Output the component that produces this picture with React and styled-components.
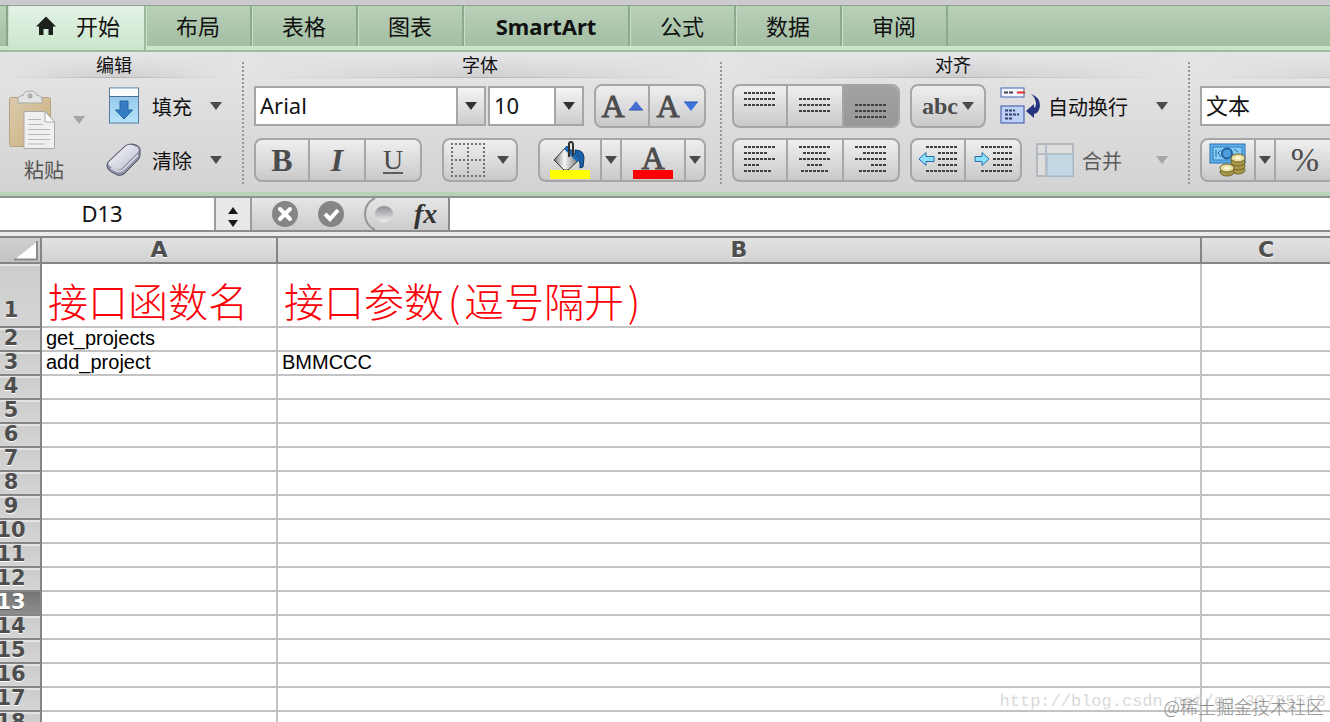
import React, { useState } from 'react'
import styled, { createGlobalStyle } from 'styled-components'

const GlobalStyle=createGlobalStyle`
    * {
        box-sizing: border-box;
    }
    body {
        margin: 0;
        background: #fff;
        font-family: "Noto Sans", "Noto Sans CJK SC", sans-serif;
        color: #111;
    }
    button, select, input {
        font-family: inherit;
        color: inherit;
        margin: 0;
    }
`
const Container=styled.div`
    position: relative;
    display: flex;
    flex-direction: column;
    height: 100vh;
    overflow: hidden;
`

/* tabs */
const TabBar=styled.nav`
    display: flex;
    flex: none;
    height: 52px;
    padding-top: 1px;
    border-top: 5px solid #cbcace;
    border-bottom: 2px solid #9dbb9f;
    background: linear-gradient(#8fa190 1px, #b9cfb9 1px, #a3bfa3 41px, #c9e6cb 41px);
`
const TabStub=styled.div`
    width: 8px;
    height: 40px;
    border-right: 2px solid #8aa58b;
`
const Tab=styled.button`
    display: flex;
    align-items: center;
    justify-content: center;
    gap: 20px;
    width: ${props=>props.$width}px;
    height: ${props=>props.$active?44:40}px;
    padding: 0 0 ${props=>props.$active?4:0}px ${props=>props.$active?4:0}px;
    border: none;
    border-right: 2px solid ${props=>props.$active?"#9cb99d":"#8ca88d"};
    background: ${props=>props.$active?"linear-gradient(#e4f2e5, #cae6cc)":"linear-gradient(#b9cfb9, #a3bfa3)"};
    box-shadow: inset 1px 0 #c9dfc9;
    font-size: 22px;
    font-weight: ${props=>props.$bold?700:400};
    line-height: 30px;
`

/* ribbon */
const Ribbon=styled.div`
    display: flex;
    flex: none;
    height: 144px;
    border-bottom: 4px solid #b5d3b8;
    background: linear-gradient(#e6e6e8, #dedede 40%, #d3d3d3);
`
const Group=styled.section`
    position: relative;
    flex: ${props=>props.$width?"none":"1"};
    width: ${props=>props.$width?props.$width+"px":"auto"};
    padding: 0 12px 0 ${props=>props.$flush?0:10}px;
    overflow: hidden;

    &::after {
        content: "";
        position: absolute;
        top: 10px;
        right: 0;
        bottom: 6px;
        width: ${props=>props.$width?2:0}px;
        background: repeating-linear-gradient(#989898 0 2px, transparent 2px 4px);
    }
`
const GroupTitle=styled.h2`
    width: ${props=>props.$width?props.$width+"px":"auto"};
    height: 26px;
    margin: 0 0 6px;
    padding-right: 4px;
    border-bottom: 1px solid;
    border-image: linear-gradient(to right, transparent, #b4b4b4, transparent) 1;
    background: linear-gradient(to right, #e3e3e4, rgba(227, 227, 228, 0) 50%, #e3e3e4), linear-gradient(#e8e8ea, #cfcfd0);
    font-size: 18px;
    font-weight: 400;
    line-height: 26px;
    text-align: center;
`
const Row=styled.div`
    display: flex;
    align-items: center;
    height: 44px;
    margin-bottom: 10px;
    gap: ${props=>props.$gap||10}px;
`
const EditTools=styled.div`
    display: flex;
`
const EditColumn=styled.div`
    flex: 1;
`
const PasteButton=styled.button`
    display: flex;
    flex-direction: column;
    width: 106px;
    height: 98px;
    padding: 6px 0 0 8px;
    border: none;
    background: none;
    color: #555;
    font-size: 20px;
    line-height: 28px;
    text-align: left;
`
const PasteTop=styled.span`
    display: flex;
    align-items: center;
    gap: 17px;
    height: 60px;
`
const PasteText=styled.span`
    padding: 7px 0 0 16px;
`
const ToolButton=styled.button`
    display: flex;
    flex: 1;
    align-items: center;
    gap: 8px;
    height: 44px;
    padding: 0 10px 0 ${props=>props.$inset||0}px;
    border: none;
    background: none;
    color: ${props=>props.disabled?"#5c5c5c":"#111"};
    font-size: 20px;
    line-height: 28px;
    white-space: nowrap;
`
const ToolText=styled.span`
    flex: 1;
    padding: 3px 0 0 ${props=>props.$indent||0}px;
    text-align: left;
`
const ButtonBox=styled.div`
    display: flex;
    flex: none;
    height: 44px;
    margin-left: ${props=>props.$apart?8:0}px;
    border: 2px solid #a6a6a6;
    border-radius: 8px;
    background: linear-gradient(#efefef, #c9c9c9);
    overflow: hidden;
`
const BoxButton=styled.button`
    display: flex;
    flex: none;
    align-items: center;
    justify-content: center;
    gap: 4px;
    width: ${props=>props.$width||54}px;
    height: 40px;
    padding: 0;
    border: none;
    border-right: 2px solid #a6a6a6;
    background: ${props=>props.$pressed?"linear-gradient(#a2a2a2, #989898)":"none"};
    color: #4c4c4c;

    &:last-child {
        border-right: none;
    }
`
const Glyph=styled.span`
    font-family: "Liberation Serif", serif;
    font-size: ${props=>props.$size||32}px;
    font-weight: ${props=>props.$bold?700:400};
    font-style: ${props=>props.$italic?"italic":"normal"};
    line-height: ${props=>props.$line||36}px;
    -webkit-text-stroke: ${props=>props.$heavy?"1px #4c4c4c":"0"};
`
const Underlined=styled(Glyph)`
    height: 28px;
    border-bottom: 2px solid #5c5c5c;
    line-height: 28px;
`
const ColorMark=styled.span`
    display: flex;
    flex-direction: column;
    align-items: center;
    justify-content: flex-end;
    width: 40px;
    height: 38px;
    border-bottom: 9px solid ${props=>props.$color};
`
const Combo=styled.div`
    position: relative;
    flex: none;
    width: ${props=>props.$width}px;
    height: 40px;
`
const Select=styled.select`
    appearance: none;
    width: 100%;
    height: 40px;
    padding: 0 30px 2px 4px;
    border: 2px solid #a6a6a6;
    border-radius: 0;
    background: #fff;
    font-size: 22px;
    line-height: 30px;
`
const ComboArrow=styled.span`
    position: absolute;
    top: 2px;
    right: 2px;
    bottom: 2px;
    display: flex;
    align-items: center;
    justify-content: center;
    width: 28px;
    border-left: 2px solid #a6a6a6;
    background: linear-gradient(#f4f4f4, #cdcdcd);
    pointer-events: none;
`

/* formula bar */
const FormulaBar=styled.div`
    display: flex;
    flex: none;
    height: 40px;
    border-top: 2px solid #8f9290;
    border-bottom: 4px solid #ebebeb;
    background: #dadada;
    box-shadow: inset 0 -2px #8c8c8c;
    padding-bottom: 2px;
`
const NameBox=styled.input`
    width: 214px;
    height: 32px;
    padding: 0 10px 2px 0;
    border: none;
    background: #fff;
    font-size: 22px;
    text-align: center;
`
const Spinner=styled.button`
    width: 38px;
    height: 32px;
    padding: 0;
    border: solid #9c9c9c;
    border-width: 0 2px;
    background: #e9e9e9;
    & svg {
        display: block;
        margin: 6px auto 0;
    }
`
const FormulaTools=styled.div`
    display: flex;
    align-items: center;
    gap: 20px;
    width: 198px;
    padding-left: 20px;
    border-right: 2px solid #8c8c8c;
    background: linear-gradient(#e6e6e6, #cccccc);
`
const IconButton=styled.button`
    display: flex;
    align-items: center;
    height: 32px;
    padding: 0;
    border: none;
    background: none;
    color: #333;
`
const FormulaInput=styled.input`
    flex: 1;
    min-width: 0;
    height: 32px;
    padding: 0 6px;
    border: none;
    background: #fff;
    font-size: 20px;
`

/* sheet */
const Sheet=styled.main`
    flex: 1;
    min-height: 0;
    overflow: hidden;
`
const Table=styled.table`
    width: 100%;
    table-layout: fixed;
    border-collapse: separate;
    border-spacing: 0;
    font-family: "Liberation Sans", "Noto Sans CJK SC", sans-serif;
    font-size: 20px;
`
const ColHead=styled.th`
    height: 28px;
    padding: 0;
    border: solid #858585;
    border-width: 2px 2px 2px 0;
    background: linear-gradient(#e2e2e2, #d2d2d2);
    color: #4e4e4e;
    font-family: "DejaVu Sans", sans-serif;
    font-size: 22px;
    line-height: 24px;
    text-shadow: 0 1px #fff;

    &:last-child {
        border-right: none;
    }
`
const Corner=styled(ColHead)`
    background: linear-gradient(#cfcfcf, #c4c4c4);
    & svg {
        display: block;
        margin-left: auto;
    }
`
const RowHead=styled.th`
    padding: 0 18px 0 0;
    border: solid #858585;
    border-width: 0 2px 2px 0;
    background: ${props=>props.$selected?"linear-gradient(#757575, #8e8e8e)":"linear-gradient(#e4e4e4 2px, #cdcdcd 2px, #d4d4d4)"};
    color: ${props=>props.$selected?"#fff":"#4e4e4e"};
    font-family: "DejaVu Sans", sans-serif;
    font-size: 21px;
    text-shadow: ${props=>props.$selected?"0 1px #555":"0 1px #fff"};
    vertical-align: bottom;
`
const RowNumber=styled.div`
    display: flex;
    justify-content: center;
    height: ${props=>props.$tall?26:22}px;
    line-height: 20px;
`
const Cell=styled.td`
    height: ${props=>props.$tall?64:24}px;
    padding: ${props=>props.$tall?"16px 6px 0":"0 4px"};
    border: solid #c3c3c3;
    border-width: 0 2px 2px 0;
    color: ${props=>props.$tall?"#fb0007":"#000"};
    font-size: ${props=>props.$tall?40:20}px;
    font-weight: ${props=>props.$tall?300:400};
    line-height: ${props=>props.$tall?40:20}px;
    vertical-align: top;
    white-space: nowrap;

    &:last-child {
        border-right: none;
    }
`
const HeadText=styled.div`
    display: flex;
    height: 40px;
    font-family: "Noto Sans CJK SC", sans-serif;
`
const Paren=styled.span`
    width: 20px;
    text-align: center;
`
const Watermark=styled.div`
    position: absolute;
    right: ${props=>props.$right}px;
    bottom: ${props=>props.$bottom}px;
    color: ${props=>props.$color};
    font-family: ${props=>props.$mono?'"Liberation Mono", monospace':'"Noto Sans CJK SC", sans-serif'};
    font-size: ${props=>props.$mono?17:18}px;
    font-weight: 300;
    line-height: 22px;
    white-space: nowrap;
    pointer-events: none;
`

/* icons */
const Arrow=({color="#4a4a4a"})=>(
    <svg width="12" height="8" viewBox="0 0 12 8"><path d="M0 0h12L6 8z" fill={color}/></svg>
)

const HomeIcon=()=>(
    <svg width="20" height="20" viewBox="0 0 20 20">
        <path d="M10 0.500L20 10.500H17V19H12.500V13H7.500V19H3V10.500H0z" fill="#1c211c"/>
    </svg>
)

const PasteIcon=()=>(
    <svg width="48" height="60" viewBox="0 0 48 60">
        <defs>
            <linearGradient id="board" x1="0" y1="0" x2="1" y2="1">
                <stop offset="0" stopColor="#dccbae"/>
                <stop offset="1" stopColor="#c9ae7b"/>
            </linearGradient>
        </defs>
        <rect x="1.500" y="7.500" width="41" height="49" rx="2" fill="url(#board)" stroke="#b5a283"/>
        <path d="M10 13V9q0-3 5-3.500Q16 1 22 1t7 4.500q5 .5 5 3.500v4z" fill="#e3e3e3" stroke="#a9a9a9"/>
        <circle cx="22" cy="6" r="2" fill="#bbb" stroke="#999"/>
        <path d="M16 21.500h21L46.500 32v26.500H16z" fill="#f0f0f0" stroke="#a9a9a9"/>
        <path d="M37 21.500V32h9.500z" fill="#fff" stroke="#a9a9a9"/>
        <path d="M20 29.500h13M20 34.500h15M20 39.500h22M20 44.500h22M20 49.500h22M20 54h17" stroke="#b7b7b7"/>
    </svg>
)

const FillIcon=()=>(
    <svg width="32" height="38" viewBox="0 0 32 38">
        <defs>
            <linearGradient id="fillBox" x1="0" y1="0" x2="0" y2="1">
                <stop offset="0" stopColor="#8dc0ea"/>
                <stop offset="1" stopColor="#b5e4f8"/>
            </linearGradient>
        </defs>
        <rect x="1.500" y="1" width="29" height="35" fill="url(#fillBox)" stroke="#587a9d"/>
        <path d="M2 1.500h28V9H2z" fill="#fbfbfb"/>
        <path d="M1.500 9.500h29" stroke="#4d6d90"/>
        <path d="M12 14h8v9h4.500L16 32l-8.500-9H12z" fill="#347cc4" stroke="#2a62a6"/>
    </svg>
)

const EraserIcon=()=>(
    <svg width="36" height="36" viewBox="0 0 36 36">
        <defs>
            <linearGradient id="eraser" x1="0" y1="0" x2="1" y2="1">
                <stop offset="0" stopColor="#fbfbff"/>
                <stop offset="1" stopColor="#b9bccb"/>
            </linearGradient>
        </defs>
        <path d="M2 20L19 4q3-2 7-2l4 1q5 2 4 7v4q-1 3-3 5L18 32q-3 2-7 1l-7-4q-3-2-3-5 0-2 1-4z" fill="#8e91a5" stroke="#4d5064"/>
        <path d="M3 20L20 4q3-2 6-1l5 2q3 2 1 5L16 26q-3 3-7 1l-5-3q-3-2-1-4z" fill="url(#eraser)"/>
        <path d="M5 26l6 3q3 1 6-1l15-15" fill="none" stroke="#cfd1df" strokeWidth="2"/>
    </svg>
)

const BorderIcon=()=>(
    <svg width="34" height="34" viewBox="0 0 34 34">
        <path d="M0 1h34M0 17h34M0 33h34M1 0v34M17 0v34M33 0v34" stroke="#717171" strokeWidth="2" strokeDasharray="2 2"/>
    </svg>
)

const BucketIcon=()=>(
    <svg width="34" height="29" viewBox="0 0 34 29">
        <defs>
            <linearGradient id="bucket" x1="0" y1="0" x2="1" y2="0">
                <stop offset="0" stopColor="#777"/>
                <stop offset=".4" stopColor="#f5f5f5"/>
                <stop offset="1" stopColor="#666"/>
            </linearGradient>
        </defs>
        <path d="M22 9q9 0 9 8l-1 9-3 1q1-8-5-12z" fill="#1a62ac" stroke="#0b3767"/>
        <path d="M14 5L27 18 15 29h-4L1 19z" fill="url(#bucket)" stroke="#333"/>
        <path d="M11 8l13 13 3-3L14 5z" fill="#1c6bbb"/>
        <path d="M16 16V3q0-2 2-2t2 3v11" fill="none" stroke="#333" strokeWidth="2"/>
    </svg>
)

const SizeArrow=({up})=>(
    <svg width="14" height="10" viewBox="0 0 14 10">
        <path d={up?"M0 9h14L7 0z":"M0 1h14L7 10z"} fill={up?"#4870d4":"#3b75dc"}/>
        <path d={up?"M0 9h14":"M0 1h14"} stroke="#2c4fb4"/>
    </svg>
)

// every line is [x, y, length]
const Lines=({lines})=>(
    <svg width="40" height="32" viewBox="0 0 40 32">
        {lines.map(([x,y,length])=>(
            <path key={y} d={`M${x} ${y}h${length}`} stroke="#404040" strokeWidth="2" strokeDasharray="3 1"/>
        ))}
    </svg>
)

const topLines=[[4,3,32],[4,9,32],[4,15,32]]
const middleLines=[[4,9,32],[4,15,32],[4,21,32]]
const bottomLines=[[4,15,32],[4,21,32],[4,27,32]]
const leftLines=[[4,3,32],[4,9,24],[4,15,32],[4,21,16],[4,27,28]]
const centerLines=[[4,3,32],[8,9,24],[4,15,32],[12,21,16],[6,27,28]]
const rightLines=[[4,3,32],[12,9,24],[4,15,32],[20,21,16],[8,27,28]]

const IndentIcon=({right})=>(
    <svg width="42" height="32" viewBox="0 0 42 32">
        <path d="M9 3h32M21 9h20M21 15h20M21 21h20M9 27h32" stroke="#404040" strokeWidth="2" strokeDasharray="3 1"/>
        <path d={right?"M3 12.500h7V8.500l7 6.500-7 6.500v-4H3z":"M17 12.500H9V8.500L2 15l7 6.500v-4h8z"} fill="#8be0fb" stroke="#2b6ea6"/>
    </svg>
)

const WrapIcon=()=>(
    <svg width="40" height="38" viewBox="0 0 40 38">
        <rect x="1" y="1" width="23" height="9" fill="#f3f6fd" stroke="#4464b0"/>
        <path d="M4 5.500h10" stroke="#445" strokeWidth="2" strokeDasharray="4 1"/>
        <path d="M17 5.500h8" stroke="#e02a20" strokeWidth="2"/>
        <rect x="1" y="19" width="23" height="17" fill="#bfd0f6" stroke="#3352a0"/>
        <path d="M5 23.500h10M5 27.500h14M5 31.500h8" stroke="#34416c" strokeWidth="2" strokeDasharray="3 1"/>
        <path d="M31 7q9 3 9 12-1 7-6 8v4l-8-7 8-7v4q2-1 2-5-1-6-5-9z" fill="#26347e"/>
    </svg>
)

const MergeIcon=()=>(
    <svg width="38" height="34" viewBox="0 0 38 34">
        <path d="M1 1h36v32H1z" fill="#dedede" stroke="#b2b8bd" strokeWidth="2"/>
        <path d="M11 11h26v22H11z" fill="#c3d6e4" stroke="#9eb8cc"/>
        <path d="M10 1v32M1 11h36" stroke="#b4bdc5" strokeWidth="2"/>
    </svg>
)

const Coins=({x,y,count})=>(
    <g>
        {Array.from({length:count},(_,i)=>(
            <ellipse key={i} cx={x} cy={y-i*4} rx="7" ry="4" fill={i===count-1?"#e9dfa0":"#a99848"} stroke="#6e6228"/>
        ))}
        <ellipse cx={x} cy={y-(count-1)*4} rx="3" ry="1.500" fill="#fffbd8"/>
    </g>
)

const MoneyIcon=()=>(
    <svg width="38" height="34" viewBox="0 0 38 34">
        <rect x="1" y="1" width="35" height="19" fill="#5eb3ea" stroke="#2b6dae"/>
        <rect x="4" y="4" width="29" height="13" fill="#86cdf4" stroke="#2f7cc0"/>
        <circle cx="18" cy="10.500" r="5" fill="#4d9fdd" stroke="#215f9f" strokeWidth="2"/>
        <path d="M7 7v7M12 7l-3 3 3 4M25 6l4 3" fill="none" stroke="#2668a8"/>
        <Coins x={29} y={27} count={4}/>
        <Coins x={18} y={29} count={2}/>
    </svg>
)

const SpinnerIcon=()=>(
    <svg width="10" height="20" viewBox="0 0 10 20">
        <path d="M0 7h10L5 0zM0 13h10l-5 7z" fill="#1a1a1a"/>
    </svg>
)

const CancelIcon=()=>(
    <svg width="26" height="26" viewBox="0 0 26 26">
        <circle cx="13" cy="13" r="13" fill="#858585"/>
        <path d="M8 8l10 10M18 8L8 18" stroke="#fff" strokeWidth="4" strokeLinecap="round"/>
    </svg>
)

const AcceptIcon=()=>(
    <svg width="26" height="26" viewBox="0 0 26 26">
        <circle cx="13" cy="13" r="13" fill="#858585"/>
        <path d="M7 13l5 5 8-9" fill="none" stroke="#fff" strokeWidth="4"/>
    </svg>
)

const BallIcon=()=>(
    <svg width="30" height="32" viewBox="0 0 30 32">
        <defs>
            <linearGradient id="ball" x1="0" y1="0" x2="0" y2="1">
                <stop offset="0" stopColor="#8d8d93"/>
                <stop offset="1" stopColor="#efefef"/>
            </linearGradient>
        </defs>
        <path d="M11 0Q1 5 1 16t10 16" fill="none" stroke="#979797" strokeWidth="2"/>
        <ellipse cx="20" cy="16" rx="9" ry="8" fill="url(#ball)"/>
    </svg>
)

const CornerIcon=()=>(
    <svg width="26" height="24" viewBox="0 0 26 24">
        <path d="M0 22h23V4z" fill="#fff"/>
        <path d="M0 21.500h23V3" fill="none" stroke="#8a8a8a" strokeWidth="2"/>
    </svg>
)

const tabs=[
    {name:"开始",width:138},
    {name:"布局",width:106},
    {name:"表格",width:106},
    {name:"图表",width:106},
    {name:"SmartArt",width:166},
    {name:"公式",width:106},
    {name:"数据",width:106},
    {name:"审阅",width:106},
]

const rows=Array.from({length:20},(_,i)=>i+1)
const data={
    2:["get_projects",""],
    3:["add_project","BMMCCC"],
}

const EditGroup=()=>(
    <Group $width={244} $flush>
        <GroupTitle>编辑</GroupTitle>
        <EditTools>
            <PasteButton disabled>
                <PasteTop>
                    <PasteIcon/>
                    <Arrow color="#a5a5a5"/>
                </PasteTop>
                <PasteText>粘贴</PasteText>
            </PasteButton>
            <EditColumn>
                <Row>
                    <ToolButton $inset={2}>
                        <FillIcon/>
                        <ToolText $indent={4}>填充</ToolText>
                        <Arrow/>
                    </ToolButton>
                </Row>
                <Row>
                    <ToolButton>
                        <EraserIcon/>
                        <ToolText $indent={2}>清除</ToolText>
                        <Arrow/>
                    </ToolButton>
                </Row>
            </EditColumn>
        </EditTools>
    </Group>
)

const FontGroup=()=>(
    <Group $width={478}>
        <GroupTitle>字体</GroupTitle>
        <Row $gap={2}>
            <Combo $width={232}>
                <Select aria-label="字体">
                    <option>Arial</option>
                    <option>Verdana</option>
                </Select>
                <ComboArrow><Arrow color="#333"/></ComboArrow>
            </Combo>
            <Combo $width={96}>
                <Select aria-label="字号">
                    <option>10</option>
                    <option>12</option>
                </Select>
                <ComboArrow><Arrow color="#333"/></ComboArrow>
            </Combo>
            <ButtonBox $apart>
                <BoxButton aria-label="增大字号"><Glyph $heavy>A</Glyph><SizeArrow up/></BoxButton>
                <BoxButton aria-label="减小字号"><Glyph $heavy>A</Glyph><SizeArrow/></BoxButton>
            </ButtonBox>
        </Row>
        <Row $gap={20}>
            <ButtonBox>
                <BoxButton aria-label="加粗"><Glyph $bold>B</Glyph></BoxButton>
                <BoxButton $width={56} aria-label="倾斜"><Glyph $bold $italic>I</Glyph></BoxButton>
                <BoxButton aria-label="下划线"><Underlined $size={28}>U</Underlined></BoxButton>
            </ButtonBox>
            <ButtonBox>
                <BoxButton $width={72} aria-label="边框"><BorderIcon/>&nbsp;<Arrow/></BoxButton>
            </ButtonBox>
            <ButtonBox>
                <BoxButton $width={62} aria-label="填充颜色"><ColorMark $color="#ffff00"><BucketIcon/></ColorMark></BoxButton>
                <BoxButton $width={20} aria-label="选择填充颜色"><Arrow/></BoxButton>
                <BoxButton $width={64} aria-label="字体颜色"><ColorMark $color="#fb0007"><Glyph $heavy $line={24}>A</Glyph></ColorMark></BoxButton>
                <BoxButton $width={18} aria-label="选择字体颜色"><Arrow/></BoxButton>
            </ButtonBox>
        </Row>
    </Group>
)

const AlignGroup=()=>(
    <Group $width={468}>
        <GroupTitle>对齐</GroupTitle>
        <Row>
            <ButtonBox>
                <BoxButton aria-label="顶端对齐"><Lines lines={topLines}/></BoxButton>
                <BoxButton $width={56} aria-label="垂直居中"><Lines lines={middleLines}/></BoxButton>
                <BoxButton $pressed aria-label="底端对齐"><Lines lines={bottomLines}/></BoxButton>
            </ButtonBox>
            <ButtonBox>
                <BoxButton $width={72} aria-label="方向"><Glyph $size={24} $bold>abc</Glyph><Arrow/></BoxButton>
            </ButtonBox>
            <ToolButton $inset={4}>
                <WrapIcon/>
                <ToolText>自动换行</ToolText>
                <Arrow/>
            </ToolButton>
        </Row>
        <Row>
            <ButtonBox>
                <BoxButton aria-label="左对齐"><Lines lines={leftLines}/></BoxButton>
                <BoxButton $width={56} aria-label="居中"><Lines lines={centerLines}/></BoxButton>
                <BoxButton aria-label="右对齐"><Lines lines={rightLines}/></BoxButton>
            </ButtonBox>
            <ButtonBox>
                <BoxButton aria-label="减少缩进"><IndentIcon/></BoxButton>
                <BoxButton aria-label="增加缩进"><IndentIcon right/></BoxButton>
            </ButtonBox>
            <ToolButton $inset={4} disabled>
                <MergeIcon/>
                <ToolText>合并</ToolText>
                <Arrow color="#a5a5a5"/>
            </ToolButton>
        </Row>
    </Group>
)

const NumberGroup=()=>(
    <Group>
        <GroupTitle $width={444}>&nbsp;</GroupTitle>
        <Row>
            <Combo $width={232}>
                <Select aria-label="数字格式">
                    <option>文本</option>
                    <option>常规</option>
                </Select>
                <ComboArrow><Arrow color="#333"/></ComboArrow>
            </Combo>
        </Row>
        <Row>
            <ButtonBox>
                <BoxButton aria-label="货币"><MoneyIcon/></BoxButton>
                <BoxButton $width={20} aria-label="选择货币"><Arrow/></BoxButton>
                <BoxButton $width={58} aria-label="百分比"><Glyph $size={34}>%</Glyph></BoxButton>
            </ButtonBox>
        </Row>
    </Group>
)

const App = () => {
    const [active,setActive]=useState("开始")
    const [name,setName]=useState("D13")
    const [formula,setFormula]=useState("")
  return (
   <Container>
    <GlobalStyle/>
    <TabBar>
        <TabStub/>
        {tabs.map((tab)=>(
            <Tab key={tab.name} $width={tab.width} $active={tab.name===active} $bold={tab.name==="SmartArt"} onClick={()=>setActive(tab.name)}>
                {tab.name==="开始" && <HomeIcon/>}
                {tab.name}
            </Tab>
        ))}
    </TabBar>
    <Ribbon>
        <EditGroup/>
        <FontGroup/>
        <AlignGroup/>
        <NumberGroup/>
    </Ribbon>
    <FormulaBar>
        <NameBox aria-label="名称框" value={name} onChange={(e)=>setName(e.target.value)}/>
        <Spinner aria-label="选择名称"><SpinnerIcon/></Spinner>
        <FormulaTools>
            <IconButton aria-label="取消"><CancelIcon/></IconButton>
            <IconButton aria-label="输入"><AcceptIcon/></IconButton>
            <IconButton aria-label="公式生成器"><BallIcon/></IconButton>
            <IconButton aria-label="插入函数"><Glyph $size={28} $bold $italic>fx</Glyph></IconButton>
        </FormulaTools>
        <FormulaInput aria-label="编辑栏" value={formula} onChange={(e)=>setFormula(e.target.value)}/>
    </FormulaBar>
    <Sheet>
        <Table>
            <colgroup>
                <col width="42"/>
                <col width="236"/>
                <col width="924"/>
                <col/>
            </colgroup>
            <thead>
                <tr>
                    <Corner aria-label="全选"><CornerIcon/></Corner>
                    <ColHead>A</ColHead>
                    <ColHead>B</ColHead>
                    <ColHead>C</ColHead>
                </tr>
            </thead>
            <tbody>
                <tr>
                    <RowHead><RowNumber $tall>1</RowNumber></RowHead>
                    <Cell $tall><HeadText>接口函数名</HeadText></Cell>
                    <Cell $tall><HeadText>接口参数<Paren>(</Paren>逗号隔开<Paren>)</Paren></HeadText></Cell>
                    <Cell $tall/>
                </tr>
                {rows.slice(1).map((row)=>(
                    <tr key={row}>
                        <RowHead $selected={row===13}><RowNumber>{row}</RowNumber></RowHead>
                        <Cell>{data[row]?.[0]}</Cell>
                        <Cell>{data[row]?.[1]}</Cell>
                        <Cell/>
                    </tr>
                ))}
            </tbody>
        </Table>
    </Sheet>
    <Watermark $mono $right={4} $bottom={9} $color="#d9d9d9">http://blog.csdn.net/qq_33785513</Watermark>
    <Watermark $right={6} $bottom={5} $color="#8c8c8c">@稀土掘金技术社区</Watermark>
   </Container>
  )
}

export default App
